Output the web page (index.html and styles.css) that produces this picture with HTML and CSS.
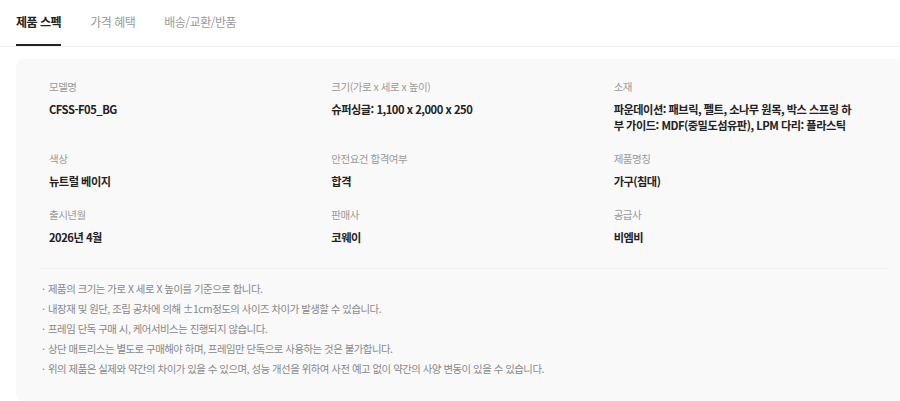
FILE: index.html
```html
<!DOCTYPE html>
<html lang="ko">
<head>
<meta charset="utf-8">
<link rel="stylesheet" href="styles.css">
</head>
<body>
<div class="page">
  <nav class="tabs">
    <span class="tab active">제품 스펙</span>
    <span class="tab">가격 혜택</span>
    <span class="tab">배송/교환/반품</span>
  </nav>
  <section class="panel">
    <div class="specs">
      <div class="item"><div class="label">모델명</div><div class="value">CFSS-F05_BG</div></div>
      <div class="item"><div class="label">크기(가로 x 세로 x 높이)</div><div class="value">슈퍼싱글: 1,100 x 2,000 x 250</div></div>
      <div class="item"><div class="label">소재</div><div class="value">파운데이션: 패브릭, 펠트, 소나무 원목, 박스 스프링 하부 가이드: MDF(중밀도섬유판), LPM 다리: 플라스틱</div></div>
      <div class="item"><div class="label">색상</div><div class="value">뉴트럴 베이지</div></div>
      <div class="item"><div class="label">안전요건 합격여부</div><div class="value">합격</div></div>
      <div class="item"><div class="label">제품명칭</div><div class="value">가구(침대)</div></div>
      <div class="item"><div class="label">출시년월</div><div class="value">2026년 4월</div></div>
      <div class="item"><div class="label">판매사</div><div class="value">코웨이</div></div>
      <div class="item"><div class="label">공급사</div><div class="value">비엠비</div></div>
    </div>
    <ul class="notes">
      <li>제품의 크기는 가로 X 세로 X 높이를 기준으로 합니다.</li>
      <li>내장재 및 원단, 조립 공차에 의해 ±1cm정도의 사이즈 차이가 발생할 수 있습니다.</li>
      <li>프레임 단독 구매 시, 케어서비스는 진행되지 않습니다.</li>
      <li>상단 매트리스는 별도로 구매해야 하며, 프레임만 단독으로 사용하는 것은 불가합니다.</li>
      <li>위의 제품은 실제와 약간의 차이가 있을 수 있으며, 성능 개선을 위하여 사전 예고 없이 약간의 사양 변동이 있을 수 있습니다.</li>
    </ul>
  </section>
</div>
</body>
</html>
```
FILE: styles.css
```css
* { box-sizing: border-box; }
html, body { margin: 0; padding: 0; background: #fff; overflow: hidden; }
body {
  font-family: "Noto Sans CJK KR", "Noto Sans", sans-serif;
  color: #222;
  letter-spacing: -0.03em;
}
.page { width: 911px; }
.tabs {
  display: flex;
  gap: 29px;
  padding-left: 16px;
  border-bottom: 1px solid #f1f1f1;
  height: 47px;
}
.tab {
  font-size: 12px;
  line-height: 18px;
  padding-top: 13px;
  color: #999;
  height: 46px;
}
.tab.active {
  color: #222;
  font-weight: 700;
  border-bottom: 2px solid #222;
}
.panel {
  margin: 12px 0 0 16px;
  background: #f9f9f9;
  border-radius: 8px;
  padding: 20px 24px 22px;
}
.specs {
  display: grid;
  grid-template-columns: repeat(3, 1fr);
  row-gap: 18px;
  padding: 0 0 23px;
  border-bottom: 1px solid #efefef;
}
.item { padding: 0 32px 0 9px; }
.label {
  font-size: 10.5px;
  line-height: 16px;
  color: #999;
  margin-bottom: 6px;
}
.value {
  font-size: 11.2px;
  line-height: 16px;
  font-weight: 600;
  color: #222;
  word-break: break-all;
}
.notes {
  list-style: none;
  margin: 0;
  padding: 10px 0 0;
}
.notes li {
  font-size: 10.4px;
  line-height: 20px;
  color: #888;
  padding-left: 8px;
  position: relative;
}
.notes li::before {
  content: "·";
  position: absolute;
  left: 2px;
  top: 0;
}
```
